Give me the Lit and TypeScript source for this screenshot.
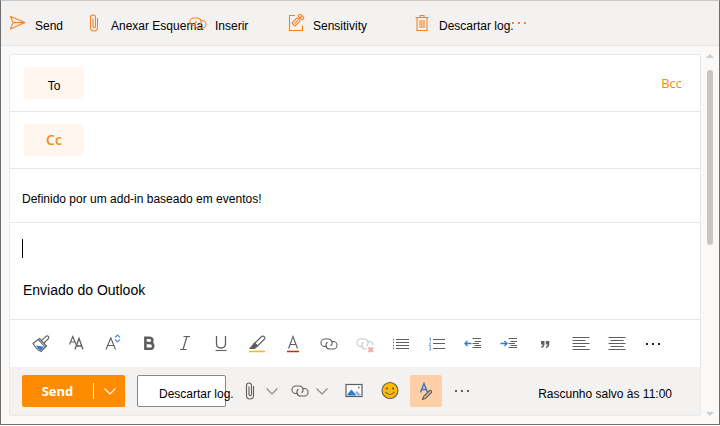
import { LitElement, html, css, svg, nothing } from "lit";
import type { TemplateResult } from "lit";
import { customElement } from "lit/decorators.js";
import { classMap } from "lit/directives/class-map.js";

// Every glyph is drawn in a 20x20 box with its centre at 10,10.
const glyphs: Record<string, TemplateResult> = {
  send: svg`<path d="M2.5 3.5 17 9.6 2.5 16 5 9.6Z M5 9.6H17" stroke-linejoin="round"/>`,
  clip: svg`<path d="M13.5 5V14.5A3.5 3.5 0 0 1 6.5 14.5V4.5A2.5 2.5 0 0 1 11.5 4.5V13.5A1.25 1.25 0 0 1 9 13.5V5.5"/>`,
  link: svg`<path d="M7.5 12.5H5.7A3.7 3.7 0 0 1 5.7 5H9.3A3.75 3.75 0 0 1 11.5 11.8"/><path d="M12.7 7.5H14.3A3.75 3.75 0 0 1 14.3 15H10.8A3.75 3.75 0 0 1 8.5 8.2"/>`,
  unlink: svg`<g stroke="#c8c6c4"><path d="M7.5 12.5H5.7A3.7 3.7 0 0 1 5.7 5H9.3A3.75 3.75 0 0 1 11.5 11.8"/><path d="M12.7 7.5H14.3A3.75 3.75 0 0 1 18 11M11.5 15H10.8A3.75 3.75 0 0 1 8.5 8.2"/></g><path d="m13.5 13.5 4.5 4.5m0-4.5-4.5 4.5" stroke="#f0a79f" stroke-width="1.8"/>`,
  label: svg`<path d="M9 2.5H3.5V17.5H16.5V12.5"/><g transform="rotate(45 12 7)"><rect x="9.8" y="6" width="4.4" height="7.5" rx="1"/><path d="M12 7.5V12"/><rect x="9" y="1" width="6" height="3.2" rx="1.4"/><path d="M12 1V6"/></g>`,
  trash: svg`<path d="M3.5 4.5H16.5M5 4.5V17.5H15V4.5M8 4V2.5H12V4M8 7V15M10 7V15M12 7V15"/>`,
  more: svg`<g fill="currentColor" stroke="none"><rect x="3" y="9" width="2" height="2"/><rect x="9" y="9" width="2" height="2"/><rect x="15" y="9" width="2" height="2"/></g>`,
  down: svg`<path d="m4.5 7.5 5.5 5.5 5.5-5.5"/>`,
  brush: svg`<path d="M2 9.5 8.500 4.500 15.500 12 10 17.500Q5 15 2 9.500Z" fill="#fff"/><path d="M5 11.500 13 12.800 10 16.500Q6.500 15 5 11.500Z" fill="#2b7cd3" stroke="none"/><path d="M7.500 5.800 14.200 13M10.500 6.300 15.500 2Q18 1.500 17.800 4.200L13 9"/>`,
  sizes: svg`<path d="M2.500 10.500 5.800 2.500 9 10.500M3.600 8H8"/><path d="m8 15.500 4-11 4 11M9.400 12H14.600" stroke-width="1.300"/>`,
  grow: svg`<path d="M3 15.500 7.800 4 12.500 15.500M4.700 11.500H11"/><path d="m12 3.500 2.500-2.500L17 3.500M12 5.500 14.500 8 17 5.500" stroke="#4a8fdc"/>`,
  bold: svg`<path d="M6.400 3.700H10.300Q13.400 3.700 13.400 6.400T10.300 9H6.400ZM6.400 9H10.800Q14.200 9 14.200 12T10.800 14.800H6.400Z" stroke-width="2.600"/>`,
  italic: svg`<path d="M8.500 2.500H15M5 15.500H11.500M12 2.500 8 15.500" stroke-width="1.200"/>`,
  underline: svg`<path d="M5.500 2V9.500Q5.500 14 10 14T14.500 9.500V2" stroke-width="1.300"/><path d="M4.500 16.500H15.500"/>`,
  marker: svg`<path d="M7.500 9.500 14.500 2.500Q16.500 1.500 17.500 3T17 5.500L10.500 12Z"/><path d="M7.500 9 3 14.500H7.500L10.500 12Z" fill="currentColor"/><path d="M2 17.500H18" stroke="#ffb900" stroke-width="1.500"/>`,
  color: svg`<path d="M5.500 14.500 10 2.500 14.500 14.500M7 10.500H13"/><path d="M4 17.500H16" stroke="#d1260e" stroke-width="1.500"/>`,
  bullets: svg`<path d="M5 5.500H18M5 8.500H18M5 11.500H18M5 14.500H18"/><path d="M2 5.500H3M2 8.500H3M2 11.500H3M2 14.500H3" stroke="#2b7cd3" stroke-width="1.300"/>`,
  numbers: svg`<path d="M6 5.500H18M6 9.500H18M6 14.500H18"/><path d="M2 5 3.500 4V7.500M2 9H3.500V10L2 11.500H4M2 13H3.500V16H2" stroke="#6f9fdc" stroke-width=".9"/>`,
  outdent: svg`<path d="M9.500 4.500H18M11.500 7.500H18M9.500 9.500H16M11.500 11.500H18M9.500 13.500H18"/><path d="M8.500 9.500H2M4.500 7 2 9.500 4.500 12" stroke="#2b7cd3" stroke-width="1.300"/>`,
  indent: svg`<path d="M9.500 4.500H18M11.500 7.500H18M9.500 9.500H16M11.500 11.500H18M9.500 13.500H18"/><path d="M1.500 9.500H8M5.500 7 8 9.500 5.500 12" stroke="#2b7cd3" stroke-width="1.300"/>`,
  quote: svg`<g fill="currentColor" stroke="none"><path d="M6 7H9.500V10Q9.500 13.500 6.300 14V12.500Q7.800 12 7.800 10.500H6ZM10.800 7H14.300V10Q14.300 13.500 11.100 14V12.500Q12.600 12 12.600 10.500H10.800Z"/></g>`,
  left: svg`<path d="M1.500 3.500H18.500M1.500 6.500H14.500M1.500 9.500H18.500M1.500 12.500H14.500M1.500 15.500H18.500"/>`,
  center: svg`<path d="M1.500 3.500H18.500M3.500 6.500H16.500M1.500 9.500H18.500M3.500 12.500H16.500M1.500 15.500H18.500"/>`,
  picture: svg`<rect x="2" y="3.500" width="16" height="12" fill="#fff" stroke-width="1.200"/><path d="M3.500 14.500V13L7.500 8.500 12.500 14.500Z" fill="#2b7cd3" stroke="none"/><path d="M11 11.500 13 10 16.500 13.500V14.500H13.500Z" fill="#8ab8e8" stroke="none"/><path d="M14 6.500H15.500" stroke-width="1.500"/>`,
  smile: svg`<circle cx="10" cy="9.500" r="8" fill="#ffb900"/><circle cx="7" cy="7.500" r="1.100" fill="#605e5c" stroke="none"/><circle cx="13" cy="7.500" r="1.100" fill="#605e5c" stroke="none"/><path d="M5.500 11Q10 16 14.500 11"/>`,
  format: svg`<path d="M4.500 11.500 8 2.500 11.500 11.500M5.500 8.500H10.500" stroke="#3b78c4" stroke-width="1.500"/><path d="M6.500 18.500 7.500 15.500 13.500 9.500Q15.800 9 15.500 11.500L9.500 17.500Z" fill="#d9b79a"/>`,
};

const icon = (name: string) => html`<svg class="icon" viewBox="0 0 20 20" aria-hidden="true">${glyphs[name]}</svg>`;

const commands: [string, string][] = [
  ["send", "Send"],
  ["clip", "Anexar Esquema"],
  ["link", "Inserir"],
  ["label", "Sensitivity"],
  ["trash", "Descartar log."],
  ["more", ""],
];

const formats = [
  "brush", "sizes", "grow", "bold", "italic", "underline", "marker", "color", "link",
  "unlink", "bullets", "numbers", "outdent", "indent", "quote", "left", "center", "more",
];

@customElement("app-root")
export class AppRoot extends LitElement {
  static styles = css`
    :host {
      display: block;
      font: 12px/16px "Liberation Sans", Arial, sans-serif;
      color: #000;
    }
    * { box-sizing: border-box; }
    button, input, textarea {
      font: inherit;
      color: inherit;
      margin: 0;
      padding: 0;
      border: 0;
      background: none;
      outline: none;
    }
    button { white-space: nowrap; }
    .icon {
      display: block;
      flex: none;
      width: 20px;
      height: 20px;
      fill: none;
      stroke: currentColor;
      stroke-width: 1.1;
    }
    .window {
      border: 1px solid #6e6e6e;
      border-top-color: #c8c8c8;
      background: #faf9f8;
    }
    .commands {
      display: grid;
      grid-template-columns: 76px 104px 98px 126px 97px 1fr;
      height: 45px;
      padding-left: 7px;
      background: #f3f2f1;
      border-bottom: 1px solid #e8e8e8;
    }
    .command {
      display: flex;
      align-items: center;
      gap: 7px;
      min-width: 0;
      justify-self: start;
    }
    .command .icon { color: #f58220; }
    .command .label { padding-top: 5px; }
    .main { display: flex; padding: 8px 0 8px 8px; }
    .card {
      flex: 1;
      min-width: 0;
      background: #fff;
      border: 1px solid #e8e8e8;
      border-radius: 2px;
    }
    .row {
      display: flex;
      align-items: center;
      height: 57px;
      padding: 0 18px 0 14px;
      border-bottom: 1px solid #e8e8e8;
    }
    .recipient {
      width: 60px;
      height: 32px;
      border-radius: 2px;
      background: #fff6f0;
    }
    .to { padding-top: 5px; }
    .accent {
      font: 600 14px/18px "Open Sans", "Noto Sans", sans-serif;
      color: #f58a1c;
    }
    .bcc {
      font: 13px/18px "Open Sans", "Noto Sans", sans-serif;
      color: #ff8c00;
    }
    .field { flex: 1; min-width: 0; height: 32px; }
    .subject { height: 54px; padding: 6px 12px 0; }
    .body { position: relative; display: flex; border-bottom: 1px solid #e8e8e8; }
    .message {
      flex: 1;
      height: 96px;
      padding: 15px 13px;
      resize: none;
      overflow: hidden;
      font-size: 14px;
      line-height: 21px;
    }
    .caret {
      position: absolute;
      left: 12px;
      top: 16px;
      width: 1px;
      height: 19px;
      background: #000;
    }
    .formats { display: flex; height: 47px; padding: 1px 0 0 13px; color: #605e5c; }
    .format {
      display: flex;
      align-items: center;
      justify-content: center;
      width: 36px;
    }
    .format:last-child { color: #201f1e; }
    .footer {
      display: flex;
      align-items: center;
      height: 48px;
      padding: 0 28px 0 12px;
      background: #f3f2f1;
      color: #605e5c;
    }
    .split {
      display: flex;
      align-items: center;
      width: 103px;
      height: 32px;
      border-radius: 2px;
      background: #ff8c00;
      color: #fff;
    }
    .submit {
      width: 71px;
      font: 700 13px/18px "Open Sans", "Noto Sans", sans-serif;
    }
    .choose {
      display: flex;
      justify-content: center;
      flex: 1;
      border-left: 1px solid #fff;
      height: 16px;
      align-items: center;
    }
    .discard {
      width: 89px;
      height: 32px;
      margin: 0 12px;
      padding: 6px 0 0 21px;
      border: 1px solid #8a8886;
      border-radius: 2px;
      background: #fff;
      color: #000;
      text-align: left;
    }
    .tool {
      display: flex;
      align-items: center;
      justify-content: center;
      width: 36px;
      height: 32px;
    }
    .tool.attach { width: 24px; }
    .tool.drop { width: 20px; color: #8a8886; }
    .tool.on { width: 32px; margin: 0 2px; border-radius: 2px; background: #ffd0a6; }
    .saved { margin-left: auto; padding-top: 6px; color: #000; white-space: nowrap; }
    .scroll {
      display: flex;
      flex-direction: column;
      align-items: center;
      width: 18px;
    }
    .arrow { width: 8px; height: 4px; background: #c8d0d4; }
    .up { clip-path: polygon(50% 0, 100% 100%, 0 100%); }
    .down { clip-path: polygon(0 0, 100% 0, 50% 100%); }
    .thumb {
      width: 6px;
      height: 175px;
      margin: 12px 0 auto;
      border-radius: 3px;
      background: #c8c6c4;
    }
    .pairs { display: flex; gap: 6px; margin-right: 4px; }
    .pair { display: flex; align-items: center; }
  `;

  private tool(name: string, title: string, kind = "") {
    return html`<button
      class=${classMap({ tool: true, attach: kind === "attach", drop: kind === "drop", on: kind === "on" })}
      aria-label=${title}
    >${icon(name)}</button>`;
  }

  render() {
    return html`
      <div class="window">
        <div class="commands" role="toolbar">
          ${commands.map(([name, text]) => html`
            <button class="command" aria-label=${text || "Mais"}>
              ${icon(name)}${text ? html`<span class="label">${text}</span>` : nothing}
            </button>`)}
        </div>
        <div class="main">
          <div class="card">
            <div class="row">
              <button class="recipient to">To</button>
              <input class="field" aria-label="To" />
              <button class="bcc">Bcc</button>
            </div>
            <div class="row">
              <button class="recipient accent">Cc</button>
              <input class="field" aria-label="Cc" />
            </div>
            <div class="row subject">
              <input class="field" aria-label="Assunto" .value=${"Definido por um add-in baseado em eventos!"} />
            </div>
            <div class="body">
              <textarea class="message" aria-label="Mensagem" .value=${"\n\nEnviado do Outlook"}></textarea>
              <span class="caret"></span>
            </div>
            <div class="formats" role="toolbar">
              ${formats.map((name) => html`<button class="format" aria-label=${name}>${icon(name)}</button>`)}
            </div>
            <div class="footer">
              <div class="split">
                <button class="submit">Send</button>
                <button class="choose" aria-label="Opções de envio">${icon("down")}</button>
              </div>
              <button class="discard">Descartar log.</button>
              <div class="pairs">
                <div class="pair">
                  ${this.tool("clip", "Anexar", "attach")}
                  ${this.tool("down", "Opções de anexo", "drop")}
                </div>
                <div class="pair">
                  ${this.tool("link", "Link", "attach")}
                  ${this.tool("down", "Opções de link", "drop")}
                </div>
              </div>
              ${this.tool("picture", "Imagem")}
              ${this.tool("smile", "Emoji")}
              ${this.tool("format", "Formatação", "on")}
              ${this.tool("more", "Mais")}
              <span class="saved">Rascunho salvo às 11:00</span>
            </div>
          </div>
          <div class="scroll" aria-hidden="true">
            <span class="arrow up"></span>
            <span class="thumb"></span>
            <span class="arrow down"></span>
          </div>
        </div>
      </div>
    `;
  }
}
